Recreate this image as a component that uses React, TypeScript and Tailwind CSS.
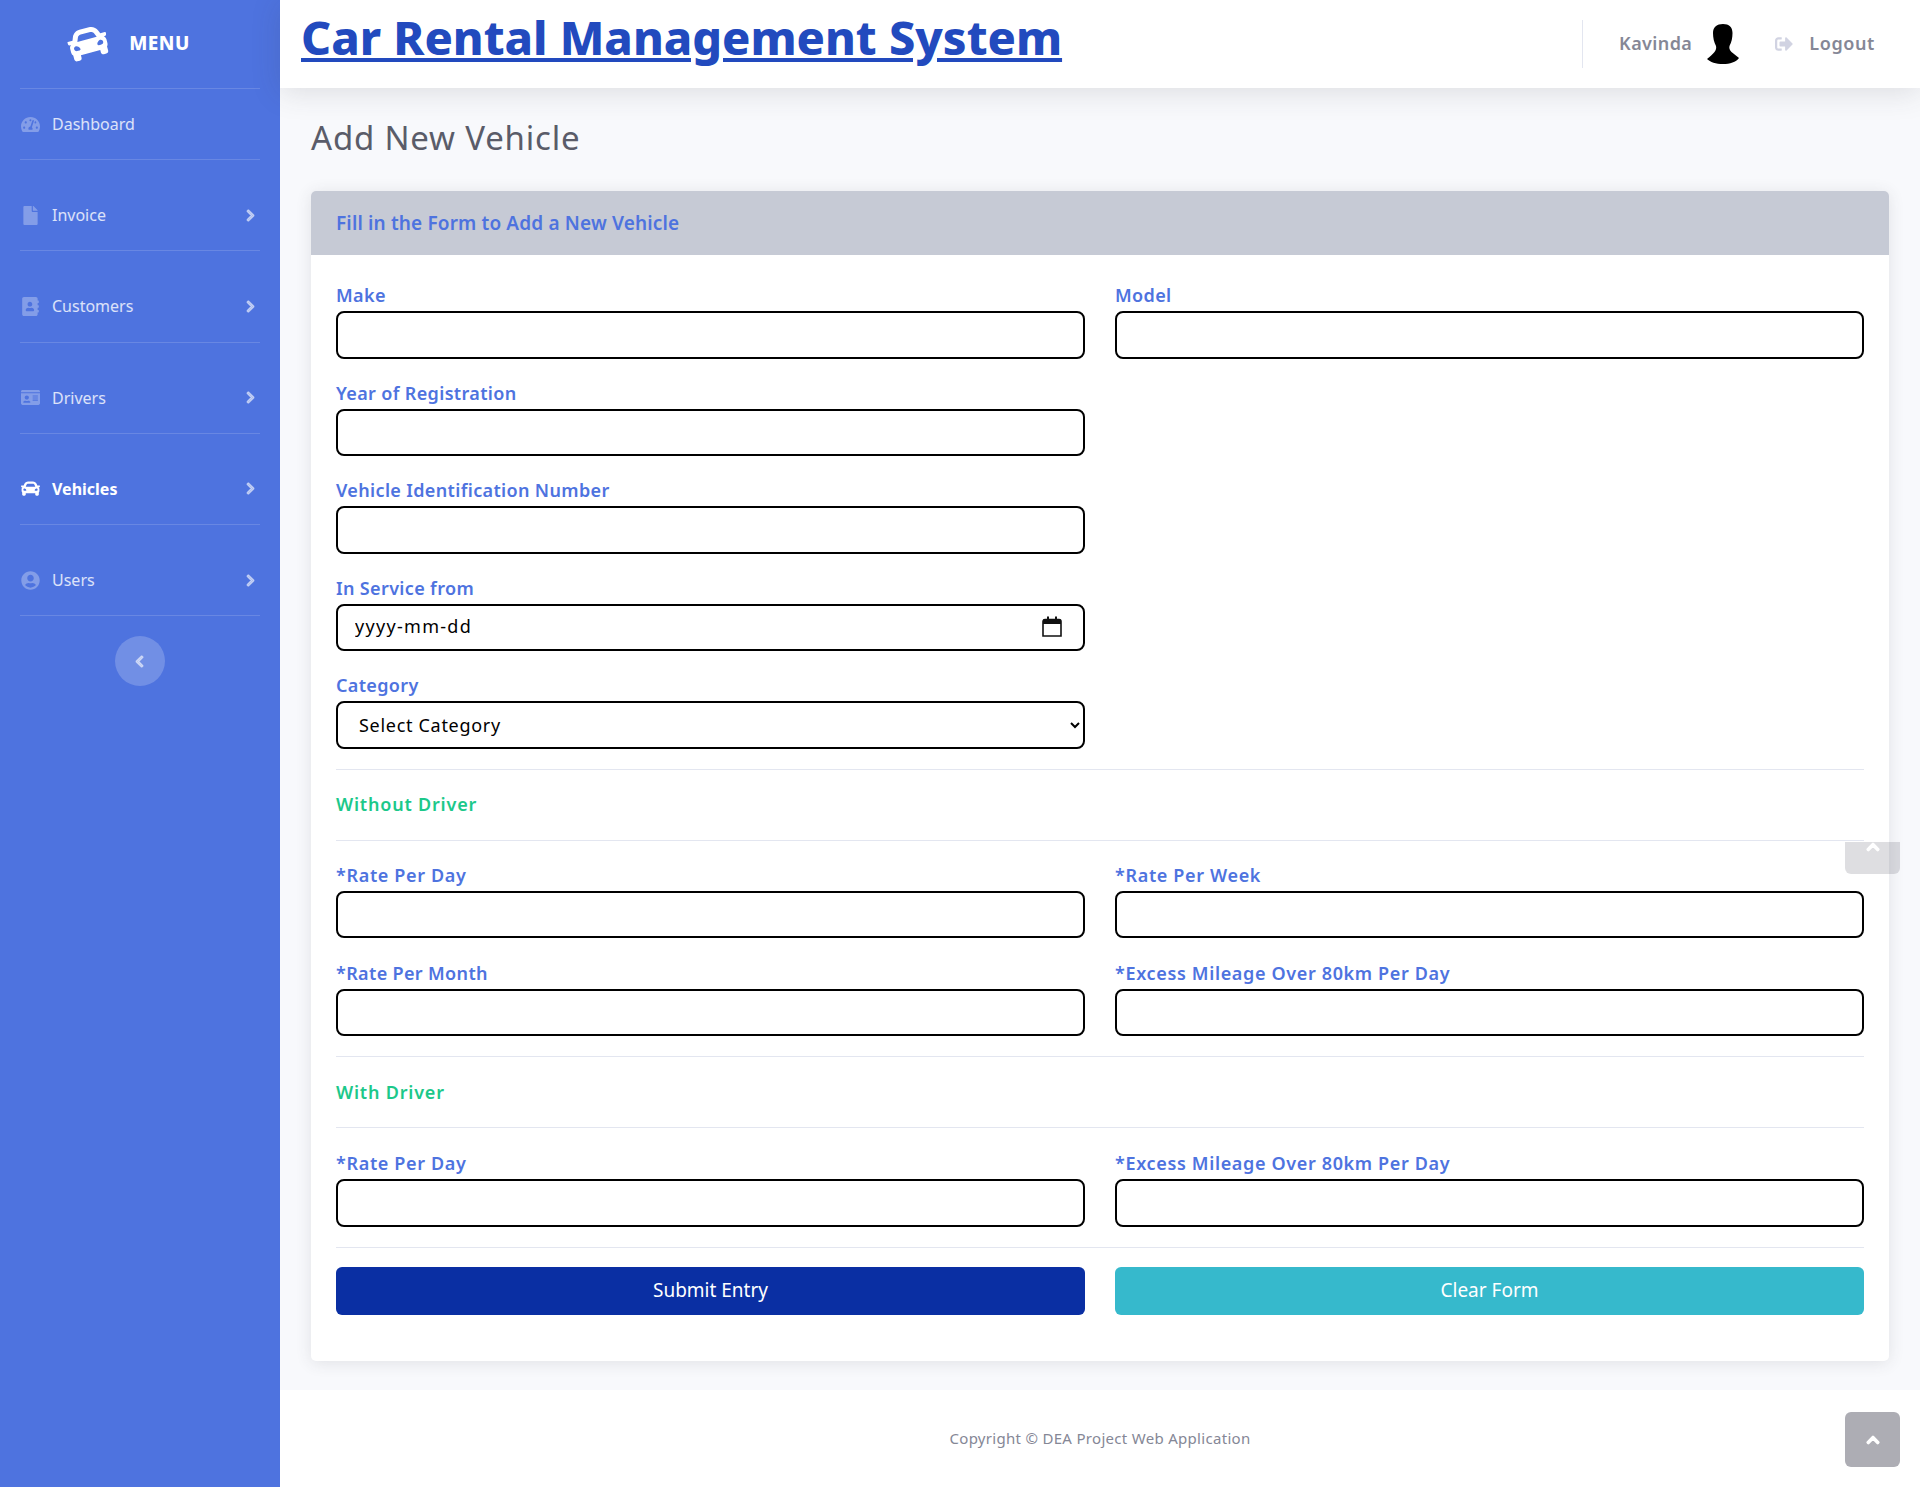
import React from 'react';
import {
  FaAddressBook,
  FaCar,
  FaChevronLeft,
  FaChevronRight,
  FaChevronUp,
  FaFile,
  FaIdCard,
  FaSignOutAlt,
  FaTachometerAlt,
  FaUserCircle,
} from 'react-icons/fa';
import type { IconType } from 'react-icons';

interface NavItem {
  label: string;
  icon: IconType;
  sub: boolean;
  active?: boolean;
}

const navItems: NavItem[] = [
  { label: 'Dashboard', icon: FaTachometerAlt, sub: false },
  { label: 'Invoice', icon: FaFile, sub: true },
  { label: 'Customers', icon: FaAddressBook, sub: true },
  { label: 'Drivers', icon: FaIdCard, sub: true },
  { label: 'Vehicles', icon: FaCar, sub: true, active: true },
  { label: 'Users', icon: FaUserCircle, sub: true },
];

const Sidebar: React.FC = () => (
  <aside className="w-[280px] shrink-0 bg-[#4e73df] flex flex-col">
    <div className="h-[89px] mx-5 border-b border-white/15 flex items-center justify-center gap-[21px] pr-[22px] pb-[2px]">
      <FaCar className="text-white text-[40px] -rotate-15" />
      <span className="text-white font-extrabold text-[19px] tracking-[0.5px]">MENU</span>
    </div>
    {navItems.map((item, i) => {
      const Icon = item.icon;
      return (
        <div
          key={item.label}
          className={`h-[71.2px] mx-5 border-b border-white/15 flex items-center ${i > 0 ? 'mt-5' : ''}`}
        >
          <span className="w-[32px] flex items-center">
            <Icon className={`text-[19px] ml-[1px] ${item.active ? 'text-white' : 'text-white/30'}`} />
          </span>
          <span className={`flex-1 text-[16px] ${item.active ? 'text-white font-bold' : 'text-white/80'}`}>
            {item.label}
          </span>
          {item.sub && <FaChevronRight className="text-white/50 text-[13px] mr-[3px] stroke-current [stroke-width:50]" />}
        </div>
      );
    })}
    <div className="flex justify-center mt-5">
      <button className="w-[50px] h-[50px] rounded-full bg-white/20 flex items-center justify-center">
        <FaChevronLeft className="text-white/50 text-[13px] -ml-[2px] stroke-current [stroke-width:50]" />
      </button>
    </div>
  </aside>
);

const Topbar: React.FC = () => (
  <header className="h-[88px] bg-white shadow-[0_4px_28px_rgba(58,59,69,0.15)] flex items-center pl-[21px] pr-[45px] relative">
    <a href="#" className="text-[#224abe] font-extrabold text-[46.800px] underline leading-none -mt-[14px] flex-1">
      Car Rental Management System
    </a>
    <div className="w-px h-12 bg-[#e3e6f0] mr-[36px]" />
    <span className="text-[#858796] font-semibold text-[18px] tracking-[0.4px] mr-[15px] -mt-[2px]">Kavinda</span>
    <svg viewBox="0 0 32 40" className="w-[32px] h-[40px] mr-[36px]">
      <path
        d="M16 0c6 0 9.5 3 9.5 9 0 5-1 9-3 13-.5 2 0 4 2 6 2.500 2 5 4 7.500 6-3 4-9 6-16 6S3 38 0 35c3-2.500 5.500-4.500 7.500-7 1.500-2 2-4 1.500-6-2-4-3-8-3-13C6 3 10 0 16 0z"
        fill="#000"
      />
    </svg>
    <FaSignOutAlt className="text-[#d1d3e2] text-[18px] mr-[16px]" />
    <span className="text-[#858796] font-semibold text-[18px] tracking-[0.6px] -mt-[2px]">Logout</span>
  </header>
);

const labelClass = 'block h-6 leading-6 mb-1 text-[18px] font-semibold text-[#4e73df]';
const controlClass =
  'block w-full h-[47.5px] border-2 border-black rounded-[8px] bg-white px-[17px] text-[18px] text-black';

const Field: React.FC<{ label: string; first?: boolean; wide?: boolean }> = ({ label, first, wide }) => (
  <div className={first ? 'col-start-1' : ''}>
    <label className={`${labelClass} ${wide ? 'tracking-[0.65px]' : 'tracking-[0.35px]'}`}>{label}</label>
    <input type="text" className={controlClass} />
  </div>
);

const SectionTitle: React.FC<{ title: string; className: string }> = ({ title, className }) => (
  <div
    className={`h-[72px] border-y border-[#e3e6f0] flex items-center text-[18px] tracking-[0.8px] font-semibold text-[#1cc88a] mt-5 ${className}`}
  >
    {title}
  </div>
);

const App: React.FC = () => (
  <div className="min-h-screen flex bg-[#f8f9fc] relative font-['Noto_Sans',sans-serif]">
    <Sidebar />
    <div className="flex-1 flex flex-col min-w-0">
      <Topbar />
      <main className="flex-1 pl-[31px] pr-[31px]">
        <h1 className="text-[33px] tracking-[0.8px] leading-[40px] text-[#5a5c69] mt-[30px] mb-[33px]">Add New Vehicle</h1>
        <div className="bg-white rounded-[5px] shadow-[0_2px_16px_rgba(58,59,69,0.12)] overflow-hidden">
          <div className="h-[64px] bg-[#c6cad5] flex items-center px-[25px] text-[19px] tracking-[0.15px] font-semibold text-[#4e73df]">
            Fill in the Form to Add a New Vehicle
          </div>
          <form className="px-[25px] pt-[28px] pb-[46px]">
            <div className="grid grid-cols-2 gap-x-[30px] gap-y-[22px]">
              <Field label="Make" />
              <Field label="Model" />
              <Field label="Year of Registration" first />
              <Field label="Vehicle Identification Number" first />
              <div className="col-start-1">
                <label className={`${labelClass} tracking-[0.35px]`}>In Service from</label>
                <div className="relative">
                  <input
                    type="text"
                    placeholder="yyyy-mm-dd"
                    className={`${controlClass} tracking-[1.3px] pb-[3px] placeholder:text-black`}
                  />
                  <svg viewBox="0 0 20 21" className="absolute right-[23px] top-[12px] w-[20px] h-[21px]">
                    <path d="M1 5.500a2 2 0 0 1 2-2h14a2 2 0 0 1 2 2V20H1z" fill="none" stroke="#111" strokeWidth="1.6" />
                    <path d="M1 3.500h18V8H1zM5 .5h2V4H5zM13 .5h2V4h-2z" fill="#111" />
                  </svg>
                </div>
              </div>
              <div className="col-start-1">
                <label className={`${labelClass} tracking-[0.35px]`}>Category</label>
                <select className={`${controlClass} tracking-[0.7px]`}>
                  <option>Select Category</option>
                </select>
              </div>
            </div>
            <SectionTitle title="Without Driver" className="mb-[22px]" />
            <div className="grid grid-cols-2 gap-x-[30px] gap-y-[22.5px]">
              <Field label="*Rate Per Day" wide />
              <Field label="*Rate Per Week" wide />
              <Field label="*Rate Per Month" />
              <Field label="*Excess Mileage Over 80km Per Day" wide />
            </div>
            <SectionTitle title="With Driver" className="mb-[23px]" />
            <div className="grid grid-cols-2 gap-x-[30px] gap-y-[22px]">
              <Field label="*Rate Per Day" wide />
              <Field label="*Excess Mileage Over 80km Per Day" wide />
            </div>
            <div className="border-t border-[#e3e6f0] mt-5 pt-[19px] grid grid-cols-2 gap-x-[30px]">
              <button type="button" className="h-[48px] rounded-[6px] bg-[#0a2fa3] text-white text-[19px]">
                Submit Entry
              </button>
              <button type="button" className="h-[48px] rounded-[6px] bg-[#36b9cc] text-white text-[19px]">
                Clear Form
              </button>
            </div>
          </form>
        </div>
      </main>
      <footer className="h-[97px] bg-white flex items-center justify-center text-[15px] tracking-[0.3px] text-[#858796]">
        Copyright © DEA Project Web Application
      </footer>
    </div>
    <div className="absolute left-[1845px] top-[842px] w-[55px] h-[32px] rounded-b-[6px] bg-[#5a5c69]/20 flex justify-center overflow-hidden">
      <FaChevronUp className="text-white text-[14px] -mt-[2px] stroke-current [stroke-width:50]" />
    </div>
    <div className="absolute left-[1845px] top-[1412px] w-[55px] h-[55px] rounded-[6px] bg-[#adadb4] flex items-center justify-center">
      <FaChevronUp className="text-white text-[14px] stroke-current [stroke-width:50]" />
    </div>
  </div>
);

export default App;
